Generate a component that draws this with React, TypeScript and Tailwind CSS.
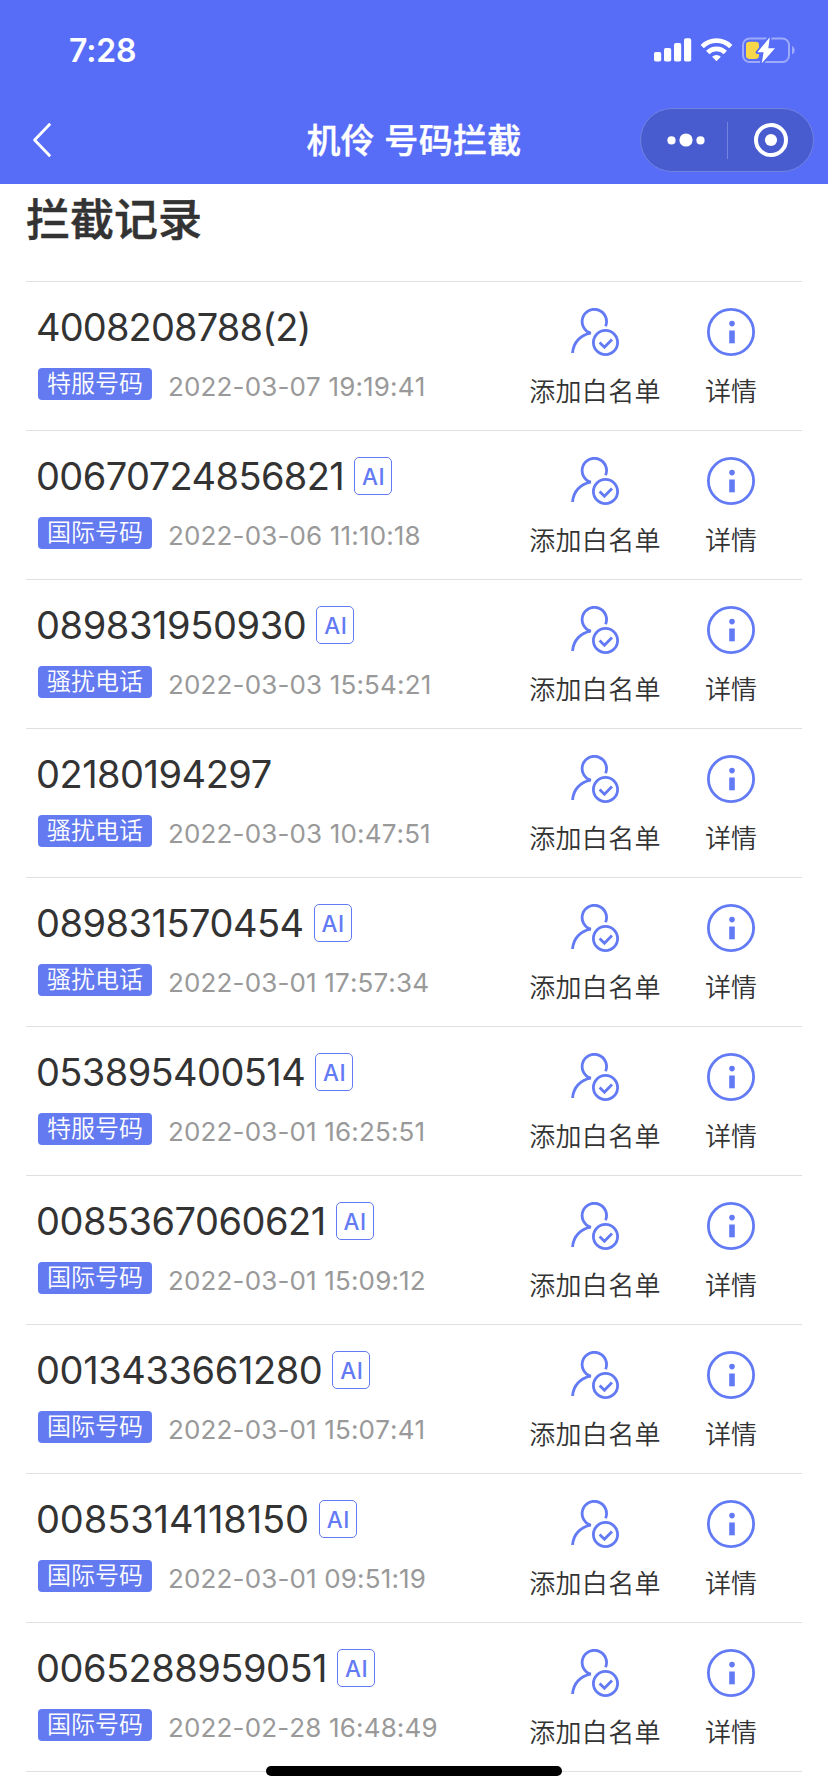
type CallRecord = {
  number: string;
  tag: string;
  time: string;
  ai: boolean;
  tracking?: string;
};

const records: CallRecord[] = [
  { number: "4008208788(2)", tag: "特服号码", time: "2022-03-07 19:19:41", ai: false, tracking: "tracking-[-0.85px]" },
  { number: "00670724856821", tag: "国际号码", time: "2022-03-06 11:10:18", ai: true, tracking: "tracking-[-0.6px]" },
  { number: "089831950930", tag: "骚扰电话", time: "2022-03-03 15:54:21", ai: true, tracking: "tracking-[-0.4px]" },
  { number: "02180194297", tag: "骚扰电话", time: "2022-03-03 10:47:51", ai: false },
  { number: "089831570454", tag: "骚扰电话", time: "2022-03-01 17:57:34", ai: true },
  { number: "053895400514", tag: "特服号码", time: "2022-03-01 16:25:51", ai: true, tracking: "tracking-[-0.6px]" },
  { number: "0085367060621", tag: "国际号码", time: "2022-03-01 15:09:12", ai: true },
  { number: "0013433661280", tag: "国际号码", time: "2022-03-01 15:07:41", ai: true, tracking: "tracking-[-0.4px]" },
  { number: "0085314118150", tag: "国际号码", time: "2022-03-01 09:51:19", ai: true, tracking: "tracking-[-0.1px]" },
  { number: "0065288959051", tag: "国际号码", time: "2022-02-28 16:48:49", ai: true },
];

function StatusBar() {
  return (
    <div className="flex h-[96px] items-center justify-between pl-[69px] pr-[32px] pt-[3px]">
      <span className="pt-[2px] text-[32px] font-semibold leading-none tracking-[-0.2px]">7:28</span>
      <div className="flex items-center">
        {/* Signal */}
        <svg width="38" height="24" viewBox="0 0 38 24" fill="currentColor">
          <rect x="0" y="14" width="7.2" height="9.5" rx="1.8" />
          <rect x="10" y="10" width="7.2" height="13.5" rx="1.8" />
          <rect x="20" y="5" width="7.2" height="18.5" rx="1.8" />
          <rect x="30" y="0.2" width="7.2" height="23.3" rx="1.8" />
        </svg>
        {/* Wifi */}
        <svg className="ml-[8px]" width="33" height="24" viewBox="0 0 33 24" fill="none" stroke="currentColor" strokeWidth="4.6">
          <path d="M2.2 8.6a20.2 20.2 0 0 1 28.6 0" />
          <path d="M7.7 14.5a12.5 12.5 0 0 1 17.6 0" />
          <path d="M16.5 23.3l-4.4-4.5a6.4 6.4 0 0 1 8.8 0z" fill="currentColor" stroke="none" />
        </svg>
        {/* Battery */}
        <svg className="ml-[8px]" width="55" height="28" viewBox="0 0 55 28" fill="none">
          <rect x="2" y="2.5" width="46" height="23.5" rx="6.5" stroke="#9dabfa" strokeWidth="2" />
          <path d="M51 10.3c3.6 1 3.6 7 0 8z" fill="#9dabfa" />
          <rect x="5" y="5.7" width="13" height="17.2" rx="3.3" fill="#f8d64a" />
          <path
            d="M28.8 1.2L16.4 16.3h6.2L20.7 27.3 34 12.2h-6.7z"
            fill="#fff"
            stroke="#576df7"
            strokeWidth="3.6"
            strokeLinejoin="round"
            paintOrder="stroke"
          />
        </svg>
      </div>
    </div>
  );
}

function NavBar() {
  return (
    <div className="grid h-[88px] grid-cols-[1fr_auto_1fr] items-center pl-[32px] pr-[14px]">
      <svg width="20" height="36" viewBox="0 0 20 36" fill="none" stroke="currentColor" strokeWidth="2.8">
        <path d="M18.2 1.8L2.6 18l15.6 16.2" strokeLinejoin="round" />
      </svg>
      <h1 className="translate-x-[-9px] pt-[2px] text-[34px] font-medium leading-none tracking-[0.3px] [-webkit-text-stroke:0.4px]">
        机伶 号码拦截
      </h1>
      <div className="flex h-[64px] w-[174px] items-center justify-self-end rounded-full border border-[#6f82e0] bg-[#495ccf]">
        <div className="flex h-full w-[86px] items-center justify-center pl-[4px]">
          <svg width="38" height="14" viewBox="0 0 38 14" fill="currentColor">
            <circle cx="4.5" cy="7.4" r="4.1" />
            <circle cx="19" cy="7" r="6.6" />
            <circle cx="33.5" cy="7.4" r="4.1" />
          </svg>
        </div>
        <div className="h-[37px] w-px bg-[#7384e0]" />
        <div className="flex h-full flex-1 items-center justify-center">
          <svg width="36" height="36" viewBox="0 0 36 36" fill="none">
            <circle cx="18" cy="18" r="15" stroke="currentColor" strokeWidth="4" />
            <circle cx="18" cy="18" r="6.1" fill="currentColor" />
          </svg>
        </div>
      </div>
    </div>
  );
}

function UserCheckIcon() {
  return (
    <svg width="48" height="48" viewBox="0 0 48 48" fill="none" stroke="#637af5" strokeWidth="2.8">
      <path d="M34.6 18.2A12.2 12.2 0 1 0 19.8 25.2C9.5 27 2.3 34.4 1.6 45" />
      <circle cx="34.5" cy="34.5" r="12.1" />
      <path d="M28.6 34.6l4.8 4.6 7.6-7.8" />
    </svg>
  );
}

function InfoIcon() {
  return (
    <svg width="48" height="48" viewBox="0 0 48 48" fill="none">
      <circle cx="24" cy="24" r="22.6" stroke="#637af5" strokeWidth="2.8" />
      <circle cx="25" cy="15.6" r="2.8" fill="#637af5" />
      <rect x="22.2" y="22.5" width="5.6" height="12.8" fill="#637af5" />
    </svg>
  );
}

function RecordRow({ number, tag, time, ai, tracking = "tracking-[-0.5px]" }: CallRecord) {
  return (
    <li className="flex h-[149px] border-t border-[#dfe0e0] pl-[10px] text-[#333]">
      <div className="flex-1 pt-[26px]">
        <div className="flex h-[38px] items-center">
          <span className={`text-[38px] leading-none ${tracking}`}>{number}</span>
          {ai && (
            <span className="ml-[10px] flex h-[38px] w-[38px] items-center justify-center rounded-[5px] border border-[#637af5] pl-px pt-[2px] text-[22.5px] font-medium leading-none tracking-[0.6px] text-[#637af5]">
              AI
            </span>
          )}
        </div>
        <div className="mt-[22px] flex h-[32px] items-center pl-[2px]">
          <span className="flex h-[32px] w-[114px] items-center justify-center rounded-[4px] bg-[#637af0] text-[24px] font-[350] leading-none text-white">
            {tag}
          </span>
          <span className="ml-[16px] pt-[5px] text-[26px] leading-none tracking-[0.15px] text-[#999] [font-kerning:none]">
            {time}
          </span>
        </div>
      </div>
      <button className="mr-[30px] flex w-[136px] flex-col items-center pt-[26px]">
        <UserCheckIcon />
        <span className="mt-[23px] whitespace-nowrap text-[26px] font-[350] leading-none tracking-[0.3px]">添加白名单</span>
      </button>
      <button className="mr-[33px] flex w-[76px] flex-col items-center pt-[26px]">
        <InfoIcon />
        <span className="mt-[23px] text-[26px] font-[350] leading-none">详情</span>
      </button>
    </li>
  );
}

export default function App() {
  return (
    <div className="relative h-[1792px] w-[828px] overflow-hidden bg-white font-['Inter','Noto_Sans_CJK_SC',sans-serif]">
      <header className="h-[184px] bg-[#576df7] text-white">
        <StatusBar />
        <NavBar />
      </header>
      <main className="px-[26px]">
        <h2 className="flex h-[97px] items-start pt-[14px] text-[44px] font-medium leading-none text-[#333] [-webkit-text-stroke:0.5px]">
          拦截记录
        </h2>
        <ul className="border-b border-[#dfe0e0]">
          {records.map((record) => (
            <RecordRow key={record.number} {...record} />
          ))}
        </ul>
      </main>
      {/* Home indicator */}
      <div className="absolute bottom-[16px] left-[266px] h-[10px] w-[296px] rounded-full bg-black" />
    </div>
  );
}
